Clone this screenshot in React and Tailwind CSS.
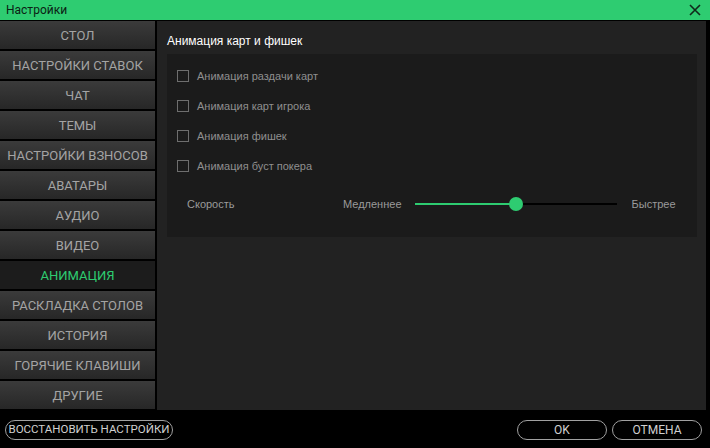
import React from 'react';

const menu = [
  'СТОЛ',
  'НАСТРОЙКИ СТАВОК',
  'ЧАТ',
  'ТЕМЫ',
  'НАСТРОЙКИ ВЗНОСОВ',
  'АВАТАРЫ',
  'АУДИО',
  'ВИДЕО',
  'АНИМАЦИЯ',
  'РАСКЛАДКА СТОЛОВ',
  'ИСТОРИЯ',
  'ГОРЯЧИЕ КЛАВИШИ',
  'ДРУГИЕ',
];

const options = [
  'Анимация раздачи карт',
  'Анимация карт игрока',
  'Анимация фишек',
  'Анимация буст покера',
];

export default function App() {
  return (
    <div className="w-[710px] h-[448px] bg-black flex flex-col overflow-hidden font-['Roboto',sans-serif]">
      {/* title bar */}
      <div className="h-[20px] bg-[#2ecc71] flex items-center justify-between pl-[6px] pr-[9px] shrink-0">
        <span className="text-[12px] text-[#0b2214] leading-none">Настройки</span>
        <svg width="12" height="12" viewBox="0 0 12 12">
          <path d="M1 1L11 11M11 1L1 11" stroke="#10291a" strokeWidth="1.6" />
        </svg>
      </div>

      <div className="flex flex-1 pt-[1px] min-h-0">
        {/* sidebar */}
        <div className="w-[155px] flex flex-col gap-[2px] shrink-0">
          {menu.map((m) => {
            const active = m === 'АНИМАЦИЯ';
            return (
              <div
                key={m}
                className={
                  active
                    ? 'h-[28px] shrink-0 flex items-center justify-center pt-[1px] bg-[#1c1c1c] text-[#2ecc71] text-[13px]'
                    : 'h-[28px] shrink-0 flex items-center justify-center pt-[1px] bg-gradient-to-b from-[#3b3b3b] to-[#272727] text-[#a4a4a4] text-[13px]'
                }
              >
                {m}
              </div>
            );
          })}
        </div>

        {/* content */}
        <div className="flex-1 ml-[2px] mr-[4px] bg-[#222222] pl-[10px] pr-[9px] font-['Liberation_Sans',sans-serif]">
          <div className="h-[33px] flex items-center text-[12px] text-white pt-[6px]">Анимация карт и фишек</div>
          <div className="bg-[#1b1b1b] h-[183px] pt-[7px]">
            {options.map((o) => (
              <div key={o} className="h-[30px] flex items-center pl-[10px]">
                <div className="w-[12px] h-[12px] border border-[#6e6e6e]" />
                <span className="ml-[8px] text-[11px] text-[#8f8f8f]">{o}</span>
              </div>
            ))}
            <div className="h-[32px] mt-[7px] flex items-center pl-[20px] text-[11px] text-[#9a9a9a]">
              <span className="w-[156px]">Скорость</span>
              <span>Медленнее</span>
              <div className="ml-[13px] w-[202px] h-[14px] relative flex items-center">
                <div className="w-[101px] h-[2px] bg-[#2ecc71]" />
                <div className="flex-1 h-[2px] bg-black" />
                <div className="absolute left-[94px] top-0 w-[14px] h-[14px] rounded-full bg-[#2ecc71]" />
              </div>
              <span className="ml-[15px]">Быстрее</span>
            </div>
          </div>
        </div>
      </div>

      {/* bottom bar */}
      <div className="h-[38px] shrink-0 flex items-center justify-between pl-[5px] pr-[8px] pt-[1px]">
        <button className="h-[20px] w-[168px] rounded-full border border-[#a0a0a0] text-[11.5px] text-[#d0d0d0] leading-none whitespace-nowrap">
          ВОССТАНОВИТЬ НАСТРОЙКИ
        </button>
        <div className="flex gap-[5px]">
          <button className="h-[20px] w-[90px] rounded-full border border-[#a0a0a0] text-[12px] text-[#d0d0d0] leading-none">
            OK
          </button>
          <button className="h-[20px] w-[90px] rounded-full border border-[#a0a0a0] text-[12px] text-[#d0d0d0] leading-none">
            ОТМЕНА
          </button>
        </div>
      </div>
    </div>
  );
}
